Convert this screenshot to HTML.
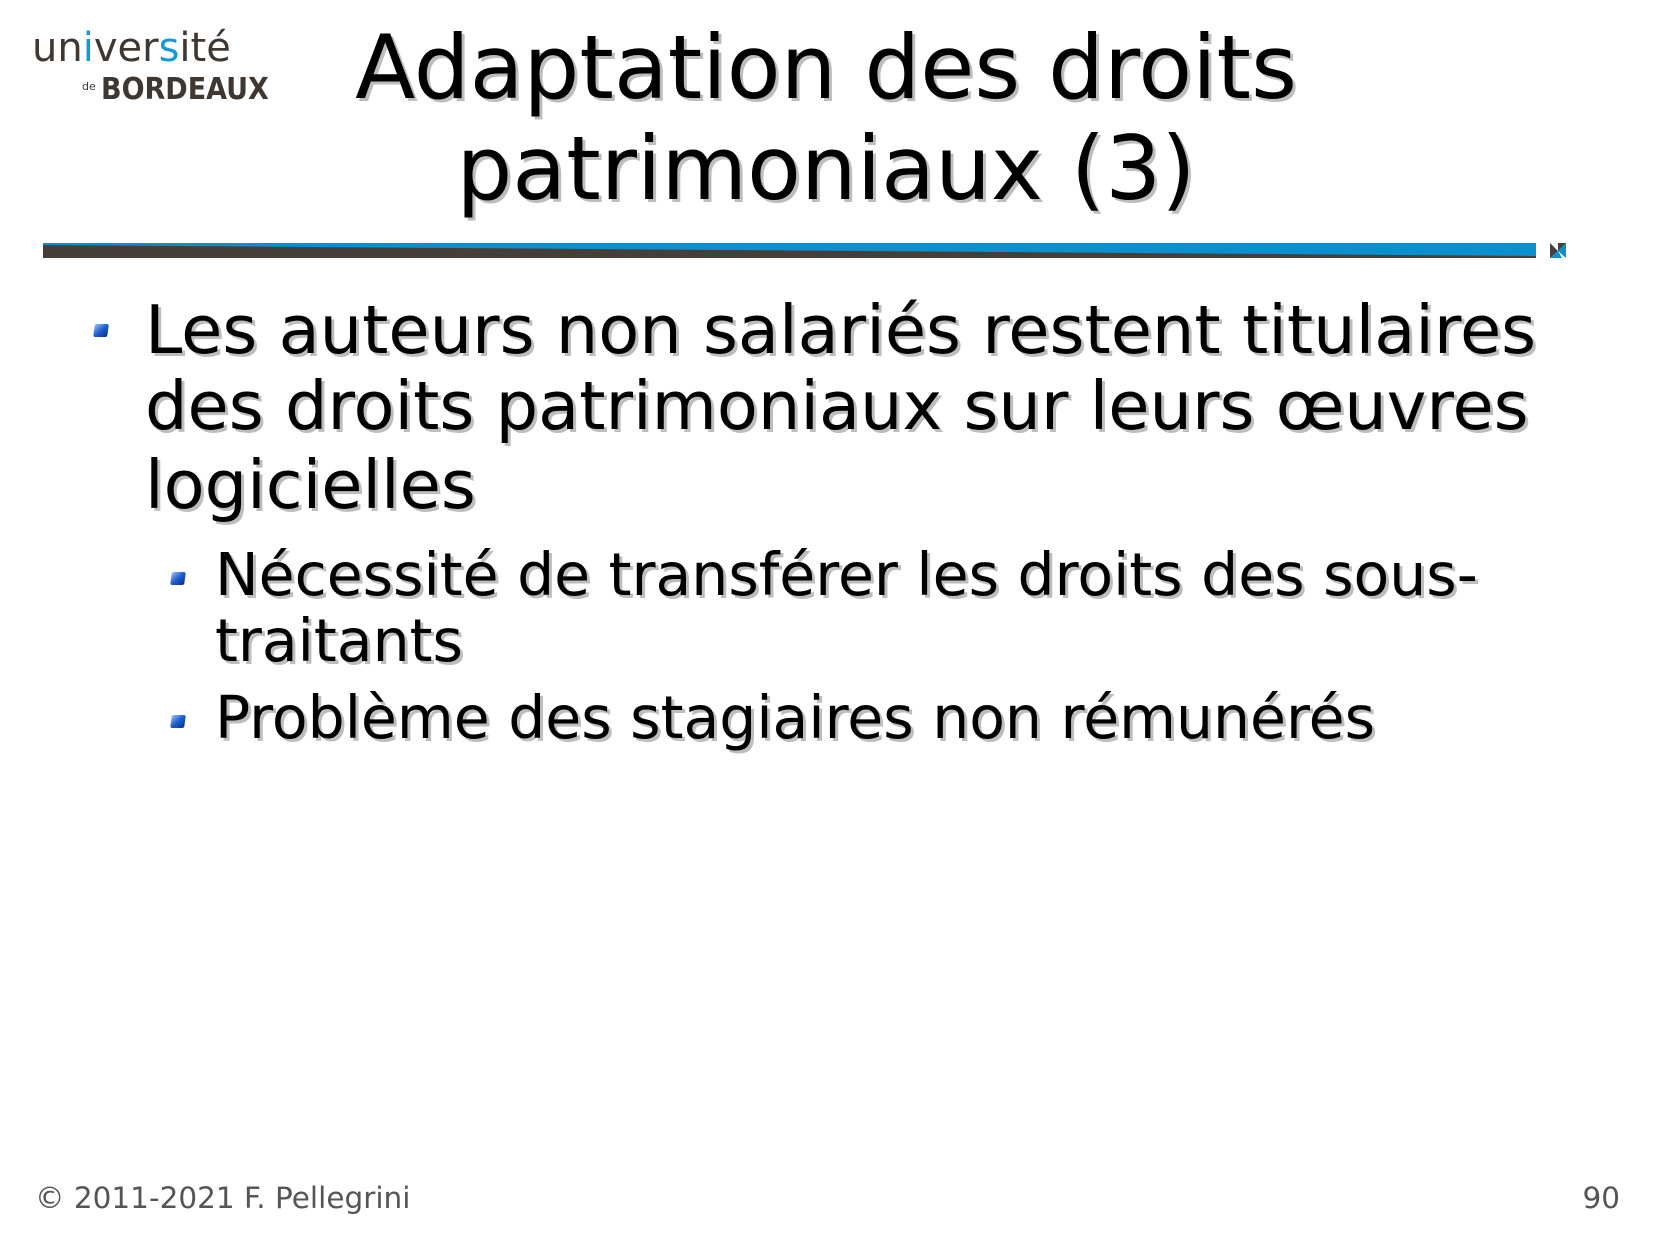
<!DOCTYPE html>
<html><head><meta charset="utf-8"><style>
html,body{margin:0;padding:0;background:#fff;}
body{width:1654px;height:1241px;position:relative;overflow:hidden;font-family:"DejaVu Sans","Liberation Sans",sans-serif;}
.t{position:absolute;line-height:1;white-space:nowrap;color:#000;text-shadow:3px 3px 0 #bdbdbd;}
.b{position:absolute;width:14px;height:13px;background:linear-gradient(135deg,#9cc4f0,#1d5fd0 50%,#0a2e8a);border-radius:2px;transform:skewX(-8deg);}
</style></head><body>
<div style="position:absolute;left:32px;top:28px;font-size:40px;line-height:1;color:#3f3832;font-family:'DejaVu Sans',sans-serif;">un<span style="color:#1598d6">i</span>ver<span style="color:#1598d6">s</span>ité</div>
<div style="position:absolute;left:82px;top:80px;font-size:11px;color:#3f3832;">de</div>
<div style="position:absolute;left:101px;top:75px;font-size:30px;line-height:1;font-weight:bold;color:#3f3832;font-family:'DejaVu Sans Condensed','DejaVu Sans',sans-serif;">BORDEAUX</div>

<div class="t" style="left:0;width:1652px;text-align:center;top:24px;font-size:88px;">Adaptation des droits</div>
<div class="t" style="left:0;width:1652px;text-align:center;top:125px;font-size:88px;">patrimoniaux (3)</div>

<svg style="position:absolute;left:0;top:0" width="1654" height="300">
<rect x="43" y="243" width="1493" height="15" fill="#0a8fcf"/>
<polygon points="43,245 43,258 1536,258 1536,256" fill="#463e38"/>
<polygon points="1550,243 1558,251 1550,258" fill="#463e38"/>
<polygon points="1558,251 1566,243 1566,258" fill="#0a8fcf"/>
<polygon points="1550,258 1558,251 1562,258" fill="#0a8fcf"/>
<polygon points="1558,243 1566,243 1558,251" fill="#463e38"/>
</svg>

<div class="b" style="left:94px;top:324px"></div>
<div class="t" style="left:145px;top:297px;font-size:67px;">Les auteurs non salariés restent titulaires</div>
<div class="t" style="left:145px;top:373px;font-size:67px;">des droits patrimoniaux sur leurs œuvres</div>
<div class="t" style="left:145px;top:452px;font-size:67px;">logicielles</div>

<div class="b" style="left:171px;top:572px"></div>
<div class="t" style="left:215px;top:546px;font-size:58.4px;">Nécessité de transférer les droits des sous-</div>
<div class="t" style="left:215px;top:612px;font-size:58.4px;">traitants</div>
<div class="b" style="left:171px;top:715px"></div>
<div class="t" style="left:215px;top:689px;font-size:58.4px;">Problème des stagiaires non rémunérés</div>

<div style="position:absolute;left:35px;top:1184px;font-size:29.5px;line-height:1;color:#555;">© 2011-2021 F. Pellegrini</div>
<div style="position:absolute;right:34px;top:1184px;font-size:29.5px;line-height:1;color:#555;">90</div>
</body></html>
